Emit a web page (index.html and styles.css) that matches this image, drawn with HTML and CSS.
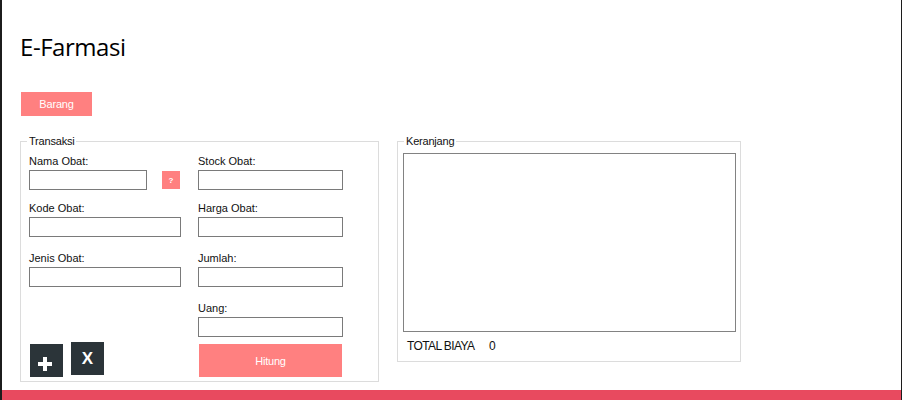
FILE: index.html
```html
<!DOCTYPE html>
<html>
<head>
<meta charset="utf-8">
<link rel="stylesheet" href="styles.css">
</head>
<body>
<div class="app">
  <main class="content">
    <h1 class="title">E-Farmasi</h1>
    <button class="btn-barang">Barang</button>
    <div class="panels">
      <fieldset class="group transaksi">
        <legend>Transaksi</legend>
        <div class="cols">
          <div class="col col-left">
            <div class="field">
              <label>Nama Obat:</label>
              <div class="inline">
                <input class="inp w-short" type="text">
                <button class="btn-q">?</button>
              </div>
            </div>
            <div class="field gap-lg">
              <label>Kode Obat:</label>
              <input class="inp w-long" type="text">
            </div>
            <div class="field last">
              <label>Jenis Obat:</label>
              <input class="inp w-long" type="text">
            </div>
            <div class="actions">
              <button class="btn-dark btn-add" aria-label="Tambah">
                <svg width="14" height="14" viewBox="0 0 14 14"><path d="M7 0V14M0 7H14" stroke="#fff" stroke-width="4"/></svg>
              </button>
              <button class="btn-dark btn-x">X</button>
            </div>
          </div>
          <div class="col col-right">
            <div class="field">
              <label>Stock Obat:</label>
              <input class="inp w-right" type="text">
            </div>
            <div class="field gap-lg">
              <label>Harga Obat:</label>
              <input class="inp w-right" type="text">
            </div>
            <div class="field gap-lg">
              <label>Jumlah:</label>
              <input class="inp w-right" type="text">
            </div>
            <div class="field last">
              <label>Uang:</label>
              <input class="inp w-right" type="text">
            </div>
            <button class="btn-hitung">Hitung</button>
          </div>
        </div>
      </fieldset>
      <fieldset class="group keranjang">
        <legend>Keranjang</legend>
        <div class="listbox"></div>
        <div class="total">
          <span class="total-label">TOTAL BIAYA</span>
          <span class="total-value">0</span>
        </div>
      </fieldset>
    </div>
  </main>
  <footer class="bar"></footer>
</div>
</body>
</html>
```
FILE: styles.css
```css
* { box-sizing: border-box; }
html, body { margin: 0; padding: 0; background: #fff; }
body {
  font-family: "Liberation Sans", Arial, sans-serif;
  font-size: 11px;
  color: #111;
}
.app {
  width: 902px;
  height: 400px;
  display: flex;
  flex-direction: column;
  border-left: 2px solid #1c1c1c;
  border-right: 1px solid #1c1c1c;
  background: #fff;
}
.content {
  flex: 1;
  padding-left: 18px;
  padding-top: 31px;
  display: flex;
  flex-direction: column;
  align-items: flex-start;
}
.title {
  margin: 0;
  font-family: "Open Sans", sans-serif;
  font-weight: 400;
  font-size: 24px;
  line-height: 32px;
  letter-spacing: -0.45px;
  color: #000;
}
.btn-barang {
  margin: 29px 0 0 1px;
  width: 71px;
  height: 24px;
  border: 0;
  padding: 0;
  background: #ff8080;
  color: #fff;
  font-family: "Liberation Sans", Arial, sans-serif;
  font-size: 11px;
  letter-spacing: -0.2px;
}
.panels {
  margin-top: 18px;
  display: flex;
  align-items: flex-start;
  gap: 18px;
}
.group {
  margin: 0;
  border: 1px solid #dcdcdc;
  min-width: 0;
}
.group legend {
  font-size: 11px;
  line-height: 14px;
  padding: 0 2px;
  margin-left: -2px;
  letter-spacing: -0.2px;
  color: #111;
}
.keranjang legend { margin-left: 1px; }
.transaksi {
  width: 359px;
  height: 248px;
  padding: 7px 0 0 8px;
}
.cols { display: flex; }
.col { display: flex; flex-direction: column; align-items: flex-start; }
.col-left { width: 169px; }
.field { display: flex; flex-direction: column; margin-bottom: 12px; }
.field.gap-lg { margin-bottom: 15px; }
.field.last { margin-bottom: 0; }
.field label {
  line-height: 13px;
  height: 13px;
  margin-bottom: 2px;
}
.inline { display: flex; align-items: center; }
.inp {
  height: 20px;
  border: 1px solid #7a7a7a;
  padding: 0 3px;
  margin: 0;
  background: #fff;
  font: inherit;
}
.w-short { width: 118px; }
.w-long { width: 152px; }
.w-right { width: 145px; }
.btn-q {
  margin-left: 15px;
  width: 18px;
  height: 18px;
  border: 0;
  padding: 0;
  background: #ff8080;
  color: #fff;
  font-family: "Liberation Sans", Arial, sans-serif;
  font-size: 8px;
  font-weight: 700;
}
.actions {
  margin-top: 55px;
  margin-left: 1px;
  display: flex;
  align-items: flex-start;
  gap: 8px;
}
.btn-dark {
  width: 33px;
  height: 33px;
  border: 0;
  padding: 0;
  background: #2b3439;
  color: #fff;
  display: flex;
  align-items: center;
  justify-content: center;
}
.btn-add { margin-top: 2px; }
.btn-add svg { margin-top: 6px; margin-left: -3px; }
.btn-x {
  font-family: "Liberation Sans", Arial, sans-serif;
  font-weight: 700;
  font-size: 17px;
  line-height: 1;
}
.btn-hitung {
  margin: 7px 0 0 1px;
  width: 143px;
  height: 33px;
  border: 0;
  padding: 0;
  background: #ff8080;
  color: #fff;
  font-family: "Liberation Sans", Arial, sans-serif;
  font-size: 11px;
  letter-spacing: -0.2px;
}
.keranjang {
  width: 344px;
  height: 228px;
  padding: 5px 4px 0 5px;
}
.listbox {
  width: 333px;
  height: 179px;
  border: 1px solid #828282;
  background: #fff;
}
.total {
  display: flex;
  margin-top: 7px;
  padding-left: 4px;
  font-size: 12px;
  line-height: 14px;
  letter-spacing: -0.6px;
}
.total-label { width: 82px; }
.bar {
  height: 10px;
  background: #e84a5f;
}
```
